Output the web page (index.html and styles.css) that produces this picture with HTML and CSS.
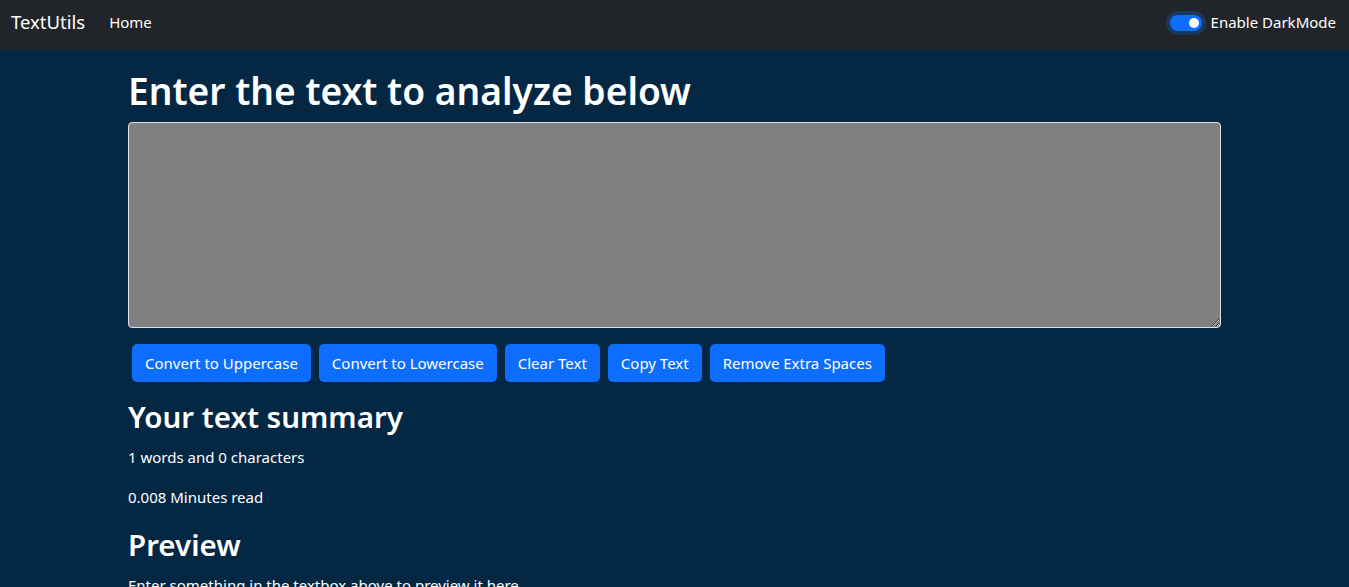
FILE: index.html
```html
<!DOCTYPE html>
<html lang="en">
<head>
<meta charset="utf-8">
<title>TextUtils</title>
<link rel="stylesheet" href="styles.css">
</head>
<body>
<nav class="navbar">
  <div class="nav-left">
    <a class="brand" href="#">TextUtils</a>
    <a class="nav-link" href="#">Home</a>
  </div>
  <div class="nav-right">
    <span class="switch"><span class="knob"></span></span>
    <label class="switch-label">Enable DarkMode</label>
  </div>
</nav>
<main class="container">
  <h1 class="title">Enter the text to analyze below</h1>
  <textarea class="textbox" rows="8"></textarea>
  <div class="buttons">
    <button class="btn">Convert to Uppercase</button>
    <button class="btn">Convert to Lowercase</button>
    <button class="btn">Clear Text</button>
    <button class="btn">Copy Text</button>
    <button class="btn">Remove Extra Spaces</button>
  </div>
  <section class="summary">
    <h2 class="subtitle">Your text summary</h2>
    <p class="para">1 words and 0 characters</p>
    <p class="para">0.008 Minutes read</p>
    <h2 class="subtitle">Preview</h2>
    <p class="para">Enter something in the textbox above to preview it here</p>
  </section>
</main>
</body>
</html>
```
FILE: styles.css
```css
* { box-sizing: border-box; }
html, body { margin: 0; padding: 0; }
body {
  background: #042743;
  color: #ffffff;
  font-family: "Noto Sans", "Open Sans", sans-serif;
  font-size: 16px;
  line-height: 1.5;
  overflow: hidden;
}
.navbar {
  height: 50px;
  background: #212529;
  display: flex;
  align-items: center;
  justify-content: space-between;
  padding: 0 13px 6px 11px;
}
.nav-left { display: flex; align-items: center; }
.brand {
  color: #fff;
  text-decoration: none;
  font-size: 18.5px;
  margin-right: 16px;
}
.nav-link {
  color: #fff;
  text-decoration: none;
  font-size: 15px;
  padding: 8px;
}
.nav-right { display: flex; align-items: center; gap: 9px; }
.switch {
  position: relative;
  display: inline-block;
  width: 32px;
  height: 16px;
  border-radius: 8px;
  background: #0d6efd;
  box-shadow: 0 0 0 4px rgba(13,110,253,0.25);
  margin-top: 1px;
}
.knob {
  position: absolute;
  right: 3px;
  top: 3px;
  width: 10px;
  height: 10px;
  border-radius: 50%;
  background: #fff;
}
.switch-label { font-size: 15px; }
.container {
  width: 1093px;
  margin: 16px auto 0;
}
.title {
  margin: 0 0 6px;
  font-size: 37.2px;
  font-weight: 600;
  line-height: 50px;
}
.textbox {
  display: block;
  width: 100%;
  height: 206px;
  background: #808080;
  border: 1px solid #dee2e6;
  border-radius: 4px;
  color: #fff;
  margin: 0;
}
.buttons {
  display: flex;
  gap: 8px;
  padding: 16px 4px 15px;
}
.btn {
  background: #0d6efd;
  color: #fff;
  border: none;
  border-radius: 5px;
  height: 38px;
  padding: 0 13px;
  font-family: inherit;
  font-size: 15px;
}
.summary { padding-top: 0; }
.subtitle {
  margin: 0 0 8px;
  font-size: 29.5px;
  font-weight: 600;
  line-height: 40px;
}
.para {
  margin: 0 0 16px;
  font-size: 15px;
  line-height: 24px;
}
```
